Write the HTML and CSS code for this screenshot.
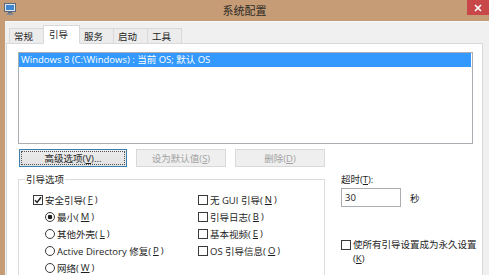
FILE: index.html
```html
<!DOCTYPE html>
<html lang="zh-CN">
  <head>
    <meta charset="UTF-8" />
    <title>系统配置</title>
    <link rel="stylesheet" href="styles.css">
  </head>
  <body>
    <div class="window">
      <div class="titlebar">
        <svg class="app-icon" width="12" height="12" viewBox="0 0 12 12">
          <rect x="0.5" y="0.5" width="11" height="8" fill="#dfe6ee" stroke="#5a6a7c" />
          <rect x="2" y="2" width="8" height="5" fill="#3f86d0" />
          <rect x="4" y="9" width="4" height="1.5" fill="#5a6a7c" />
          <rect x="2.5" y="10.5" width="7" height="1.5" fill="#7a8a9c" />
        </svg>
        <span class="title">系统配置</span>
        <div class="close">
          <svg width="8" height="8" viewBox="0 0 8 8">
            <path d="M1 1 L7 7 M7 1 L1 7" stroke="#fff" stroke-width="1.6" />
          </svg>
        </div>
      </div>

      <div class="frame">
        <div class="frame-edge"></div>
        <div class="client">
          <div class="tabs">
            <div class="tab">常规</div>
            <div class="tab active">引导</div>
            <div class="tab">服务</div>
            <div class="tab">启动</div>
            <div class="tab">工具</div>
          </div>

          <div class="panel">
            <div class="listbox">
              <div class="item selected">Windows 8 (C:\Windows) : 当前 OS; 默认 OS</div>
            </div>

            <div class="buttons">
              <button class="btn btn-wide focused">高级选项(<u>V</u>)...</button>
              <button class="btn" disabled>设为默认值(<u>S</u>)</button>
              <button class="btn" disabled>删除(<u>D</u>)</button>
            </div>

            <div class="lower">
              <fieldset class="group">
                <legend>引导选项</legend>
                <div class="cols">
                  <div class="col col-left">
                    <div class="row"><span class="cb checked"><svg width="8" height="8" viewBox="0 0 8 8"><path d="M1 4.2 L3.1 6.4 L7 1.2" fill="none" stroke="#222" stroke-width="1.5" /></svg></span>安全引导(<u>F</u>)</div>
                    <div class="row sub"><span class="rb checked"></span>最小(<u>M</u>)</div>
                    <div class="row sub"><span class="rb"></span>其他外壳(<u>L</u>)</div>
                    <div class="row sub"><span class="rb"></span>Active Directory 修复(<u>P</u>)</div>
                    <div class="row sub"><span class="rb"></span>网络(<u>W</u>)</div>
                  </div>
                  <div class="col col-right">
                    <div class="row"><span class="cb"></span>无 GUI 引导(<u>N</u>)</div>
                    <div class="row"><span class="cb"></span>引导日志(<u>B</u>)</div>
                    <div class="row"><span class="cb"></span>基本视频(<u>E</u>)</div>
                    <div class="row"><span class="cb"></span>OS 引导信息(<u>O</u>)</div>
                  </div>
                </div>
              </fieldset>

              <div class="side">
                <div class="side-label">超时(<u>T</u>):</div>
                <div class="timeout-row">
                  <input class="timeout" type="text" value="30" />
                  <span>秒</span>
                </div>
                <div class="perm">
                  <span class="cb"></span>
                  <span class="perm-text">使所有引导设置成为永久设置<br>(<u>K</u>)</span>
                </div>
              </div>
            </div>
          </div>
        </div>
      </div>
    </div>
  </body>
</html>
```

FILE: styles.css
```css
* {
  box-sizing: border-box;
}

body {
  margin: 0;
  font-family: "Open Sans", "Noto Sans CJK SC", sans-serif;
  font-size: 9.5px;
  color: #1e1e1e;
  background: #f0f0f0;
}

.window {
  width: 489px;
  height: 275px;
  overflow: hidden;
  display: flex;
  flex-direction: column;
}

.titlebar {
  height: 21px;
  flex-shrink: 0;
  background: #c59c76;
  display: grid;
  grid-template-columns: 1fr auto 1fr;
  align-items: start;
}

.app-icon {
  margin: 3px 0 0 4px;
}

.title {
  font-family: "Noto Sans CJK SC", sans-serif;
  font-size: 11px;
  line-height: 20px;
  color: #2e2a26;
}

.close {
  justify-self: end;
  width: 22px;
  height: 15px;
  background: #c8484a;
  display: flex;
  align-items: center;
  justify-content: center;
}

.frame {
  flex: 1;
  display: flex;
  min-height: 0;
}

.frame-edge {
  width: 5px;
  background: #c59c76;
}

.client {
  flex: 1;
  display: flex;
  flex-direction: column;
  padding: 3px 0 0 1px;
  border-top: 1px solid #f8f8f8;
  background: #f0f0f0;
}

.tabs {
  display: flex;
  align-items: flex-end;
  height: 19px;
  margin: 0 0 -1px 3px;
  position: relative;
  z-index: 1;
}

.tab {
  width: 35px;
  height: 16px;
  margin-right: -1px;
  padding: 0 0 1px 4px;
  display: flex;
  align-items: center;
  border: 1px solid #d9d9d9;
  background: #ececec;
}

.tab.active {
  width: 37px;
  height: 19px;
  padding-left: 5px;
  background: #fff;
  border-bottom-color: #fff;
  z-index: 2;
}

.panel {
  flex: 1;
  width: 477px;
  background: #fff;
  border: 1px solid #d9d9d9;
  padding: 8px 0 0 11px;
}

.listbox {
  width: 455px;
  height: 92px;
  border: 1px solid #abadb3;
  padding: 0 1px 0 0;
}

.item {
  height: 14px;
  line-height: 14px;
  padding-left: 2px;
}

.item.selected {
  background: #3399ff;
  color: #fff;
}

.buttons {
  display: flex;
  margin-top: 5px;
  padding-left: 1px;
}

.btn {
  width: 90px;
  height: 18px;
  margin-right: 9px;
  padding: 0;
  font-family: inherit;
  font-size: 9.5px;
  color: #1e1e1e;
  background: #e5e5e5;
  border: 1px solid #acacac;
}

.btn-wide {
  width: 108px;
  margin-right: 9px;
}

.btn.focused {
  border-color: #3c7fb1;
  background: linear-gradient(#ececec, #e2e2e2);
  outline: 1px dotted #555;
  outline-offset: -3px;
}

.btn:disabled {
  color: #a3a3a3;
  background: #efefef;
  border-color: #d9d9d9;
}

.lower {
  display: flex;
  margin-top: 6px;
}

.group {
  width: 307px;
  height: 130px;
  margin: 0;
  min-width: 0;
  padding: 0 0 0 6px;
  border: 1px solid #dcdcdc;
}

.group legend {
  padding: 0 1px;
  line-height: 13px;
}

.cols {
  display: flex;
  padding-top: 5px;
}

.col-left {
  width: 173px;
  padding-left: 8px;
}

.row {
  height: 17px;
  display: flex;
  align-items: center;
  gap: 2px;
  white-space: nowrap;
}

.row.sub {
  padding-left: 12px;
}

.cb,
.rb {
  width: 10px;
  height: 10px;
  flex-shrink: 0;
  border: 1px solid #3a3a3a;
  background: #fff;
  display: inline-flex;
  align-items: center;
  justify-content: center;
}

.rb {
  border-radius: 50%;
}

.rb.checked {
  background: radial-gradient(circle, #1e1e1e 0 2px, #fff 2.6px);
}

.side {
  width: 140px;
  margin-left: 16px;
}

.side-label {
  line-height: 13px;
}

.timeout-row {
  display: flex;
  align-items: center;
  gap: 9px;
  margin-top: 2px;
}

.timeout {
  width: 60px;
  height: 19px;
  padding: 0 3px;
  font-family: inherit;
  font-size: 9.5px;
  color: #1e1e1e;
  border: 1px solid #abadb3;
}

.perm {
  display: flex;
  align-items: flex-start;
  gap: 2px;
  margin-top: 31px;
}

.perm .cb {
  margin-top: 2px;
}

.perm-text {
  line-height: 14px;
  white-space: nowrap;
}
```
